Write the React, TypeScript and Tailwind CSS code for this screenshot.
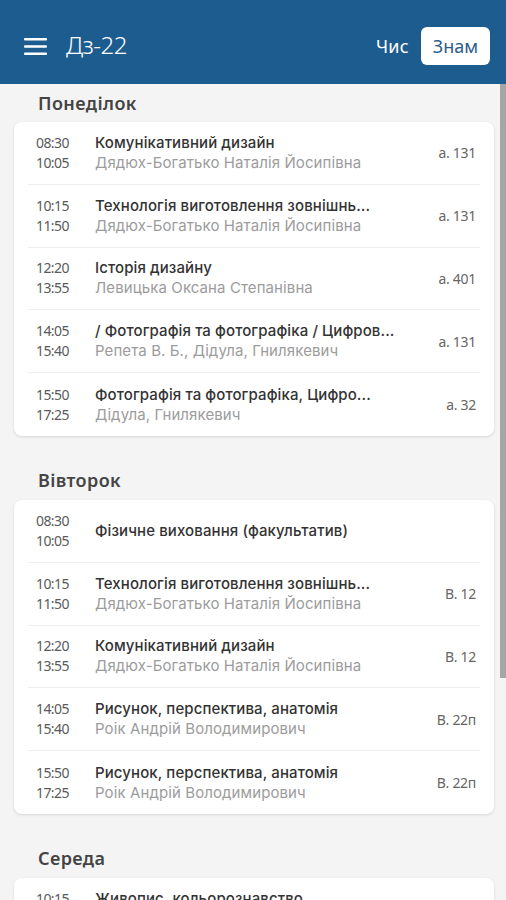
import React from "react";

type Row = { s: string; e: string; subj: string; teacher?: string; room?: string };

const days: { name: string; rows: Row[] }[] = [
  {
    name: "Понеділок",
    rows: [
      { s: "08:30", e: "10:05", subj: "Комунікативний дизайн", teacher: "Дядюх-Богатько Наталія Йосипівна", room: "а. 131" },
      { s: "10:15", e: "11:50", subj: "Технологія виготовлення зовнішнь...", teacher: "Дядюх-Богатько Наталія Йосипівна", room: "а. 131" },
      { s: "12:20", e: "13:55", subj: "Історія дизайну", teacher: "Левицька Оксана Степанівна", room: "а. 401" },
      { s: "14:05", e: "15:40", subj: "/ Фотографія та фотографіка / Цифров...", teacher: "Репета В. Б., Дідула, Гнилякевич", room: "а. 131" },
      { s: "15:50", e: "17:25", subj: "Фотографія та фотографіка, Цифро...", teacher: "Дідула, Гнилякевич", room: "а. 32" },
    ],
  },
  {
    name: "Вівторок",
    rows: [
      { s: "08:30", e: "10:05", subj: "Фізичне виховання (факультатив)" },
      { s: "10:15", e: "11:50", subj: "Технологія виготовлення зовнішнь...", teacher: "Дядюх-Богатько Наталія Йосипівна", room: "В. 12" },
      { s: "12:20", e: "13:55", subj: "Комунікативний дизайн", teacher: "Дядюх-Богатько Наталія Йосипівна", room: "В. 12" },
      { s: "14:05", e: "15:40", subj: "Рисунок, перспектива, анатомія", teacher: "Роік Андрій Володимирович", room: "В. 22п" },
      { s: "15:50", e: "17:25", subj: "Рисунок, перспектива, анатомія", teacher: "Роік Андрій Володимирович", room: "В. 22п" },
    ],
  },
  {
    name: "Середа",
    rows: [
      { s: "10:15", e: "11:50", subj: "Живопис, кольорознавство", teacher: "Мельник Ірина Петрівна", room: "а. 401" },
    ],
  },
];

function LessonRow({ r, last }: { r: Row; last: boolean }) {
  return (
    <div className={"flex items-center h-[62.8px] pl-[8px] pr-[4px] " + (last ? "" : "border-b border-[#eeeeee]")}>
      <div className="w-[59px] shrink-0 flex flex-col text-[14px] leading-[20px] text-[#5a5a5a] tracking-[-0.6px]">
        <span>{r.s}</span>
        <span>{r.e}</span>
      </div>
      <div className="flex-1 min-w-0 flex flex-col text-[15px] leading-[20px] tracking-[0.1px]" style={{ fontFamily: 'Inter, "Noto Sans", sans-serif' }}>
        <span className="text-[#333333] font-medium truncate">{r.subj}</span>
        {r.teacher && <span className="text-[#9c9c9c] truncate">{r.teacher}</span>}
      </div>
      {r.room && <div className="shrink-0 pl-3 text-[14px] text-[#666666] tracking-[-0.3px]">{r.room}</div>}
    </div>
  );
}

export default function App() {
  return (
    <div className="w-[506px] h-[900px] overflow-hidden flex flex-col bg-[#f4f4f4]" style={{ fontFamily: '"Noto Sans", "DejaVu Sans", sans-serif' }}>
      <div className="h-[84px] shrink-0 bg-[#1d5c8f] flex flex-col">
        <div className="h-[8px] shrink-0" />
        <div className="flex-1 flex items-center pl-[24px] pr-[16px]">
          <svg width="23" height="17" viewBox="0 0 23 17" className="shrink-0">
            <rect x="0" y="0" width="23" height="2.6" rx="1" fill="#ffffff" />
            <rect x="0" y="7.2" width="23" height="2.6" rx="1" fill="#ffffff" />
            <rect x="0" y="14.4" width="23" height="2.6" rx="1" fill="#ffffff" />
          </svg>
          <div className="ml-[19px] text-white text-[24px] font-light tracking-[-0.5px] mt-[-2px]">Дз-22</div>
          <div className="flex-1" />
          <div className="text-white text-[18px] tracking-[0.3px] mr-[12px]">Чис</div>
          <div className="bg-white rounded-[6px] h-[38px] w-[69px] flex items-center justify-center text-[18px] text-[#2b5d8a]">Знам</div>
        </div>
      </div>
      <div className="flex-1 flex min-h-0">
        <div className="flex-1 min-w-0 flex flex-col">
          {days.map((d, i) => (
            <div key={d.name} className={i === 0 ? "" : "mt-[26px]"}>
              <div className="h-[38px] flex items-center pl-[38px] text-[18px] font-semibold tracking-[0.4px] text-[#444444]">{d.name}</div>
              <div className="ml-[14px] mr-[6px] bg-white rounded-[8px] shadow-[0_1px_3px_rgba(0,0,0,0.12)] px-[14px]">
                {d.rows.map((r, j) => (
                  <LessonRow key={j} r={r} last={j === d.rows.length - 1} />
                ))}
              </div>
            </div>
          ))}
        </div>
        <div className="w-[6px] shrink-0 flex flex-col">
          <div className="h-[594px] bg-[#a6a6a6]" />
        </div>
      </div>
    </div>
  );
}
